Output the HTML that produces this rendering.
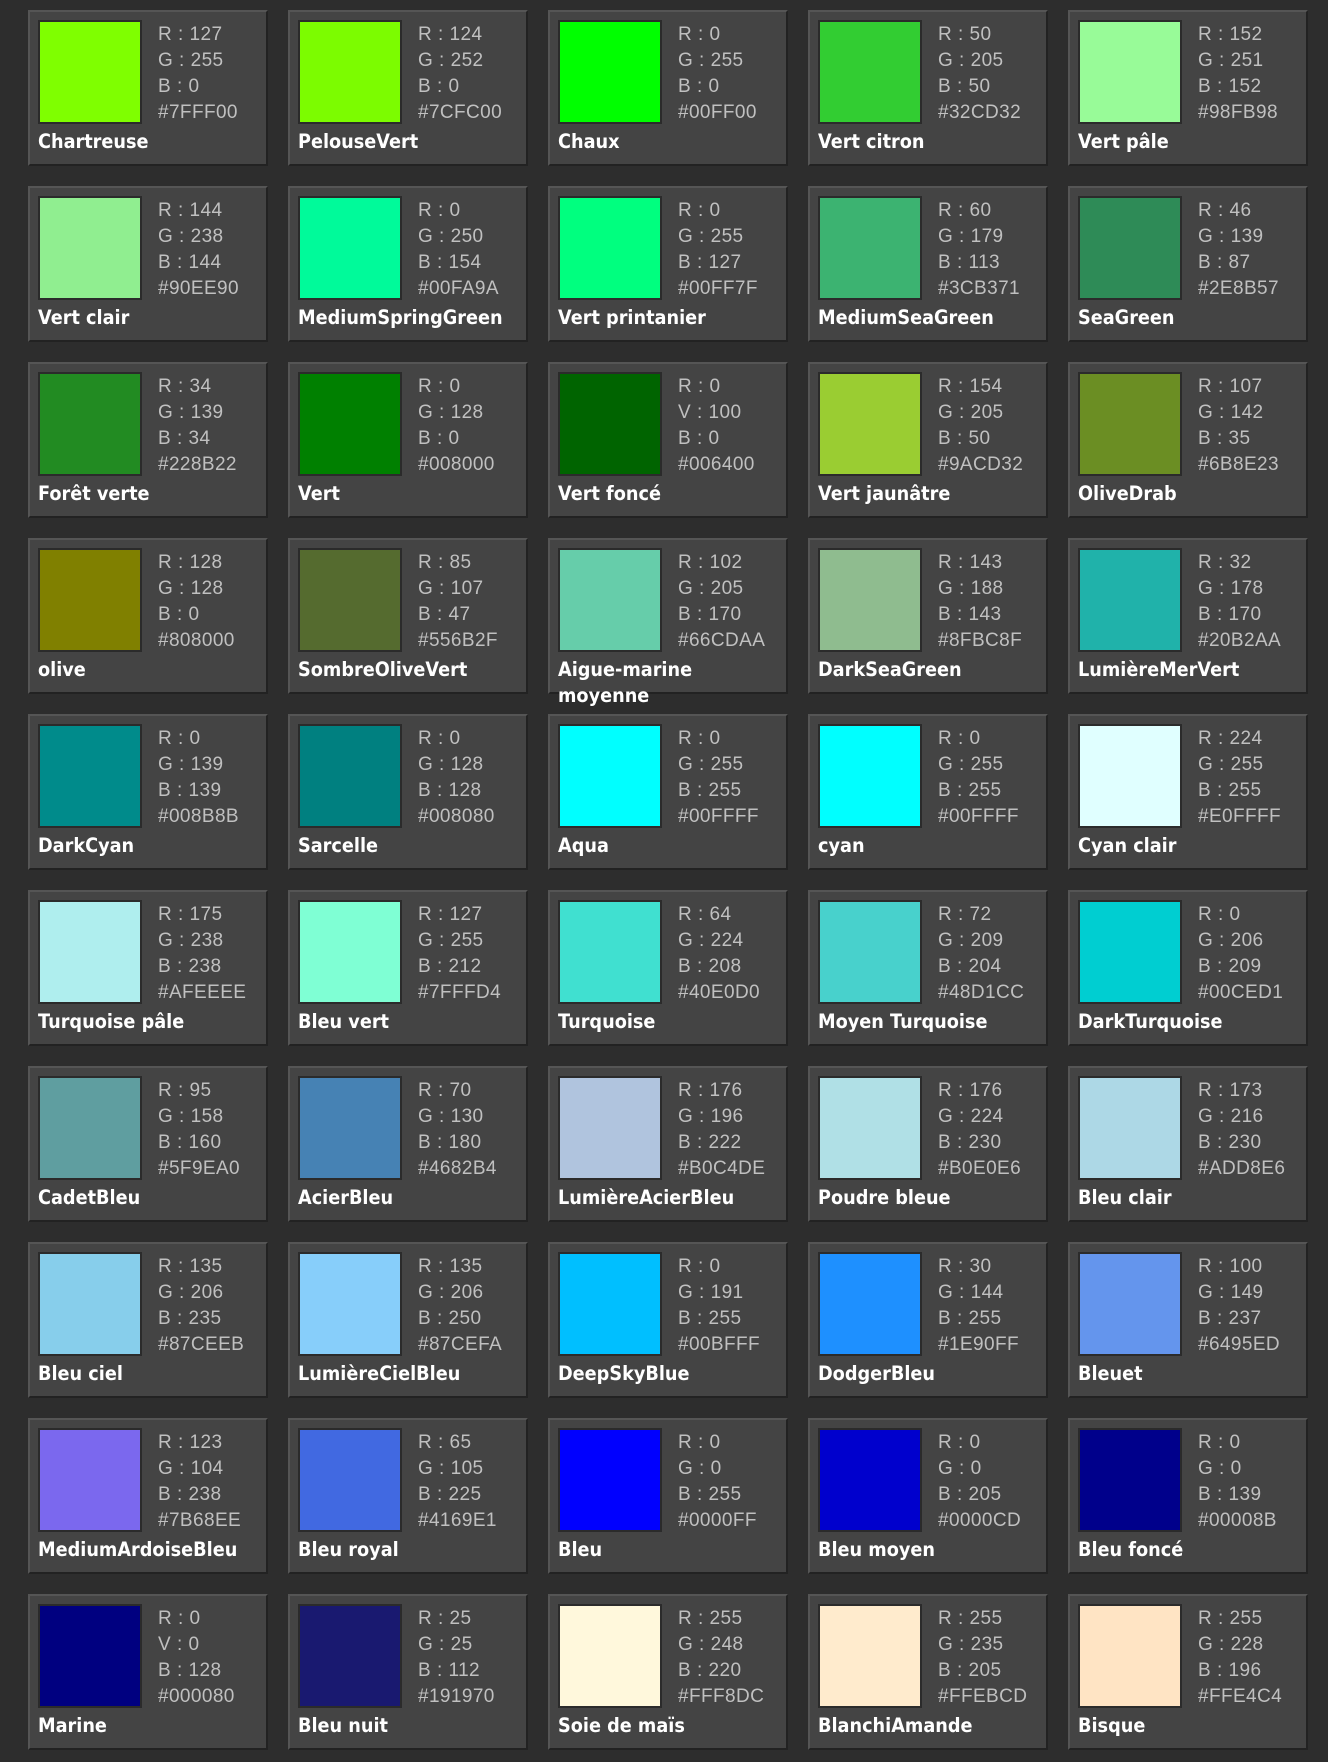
<!DOCTYPE html>
<html lang="fr"><head><meta charset="utf-8"><title>Couleurs</title>
<style>
html,body{margin:0;padding:0;width:1328px;height:1762px;background:#2d2d2d;overflow:hidden}
.g{position:absolute;left:28px;top:10px;display:grid;grid-template-columns:repeat(5,240px);grid-auto-rows:156px;column-gap:20px;row-gap:20px}
.c{position:relative;box-sizing:border-box;background:#444;border:2px solid;border-color:#555 #222 #222 #555;font-family:"DejaVu Sans","Liberation Sans",sans-serif}
.s{position:absolute;left:8px;top:8px;width:100px;height:100px;border:2px solid #2b2b2b}
.t{position:absolute;left:128px;top:10px;font-family:"Liberation Sans",sans-serif;font-size:19px;line-height:26px;color:#c0c0c0;letter-spacing:.4px;word-spacing:.2px;white-space:nowrap}
.n{position:absolute;left:8px;top:119px;width:225px;font-size:17.7px;line-height:24px;font-weight:bold;color:#fff;transform:scaleY(1.08);transform-origin:0 18px}
</style></head><body>
<div class="g">
<div class="c"><div class="s" style="background:#7FFF00"></div><div class="t">R : 127<br>G : 255<br>B : 0<br>#7FFF00</div><div class="n">Chartreuse</div></div>
<div class="c"><div class="s" style="background:#7CFC00"></div><div class="t">R : 124<br>G : 252<br>B : 0<br>#7CFC00</div><div class="n">PelouseVert</div></div>
<div class="c"><div class="s" style="background:#00FF00"></div><div class="t">R : 0<br>G : 255<br>B : 0<br>#00FF00</div><div class="n">Chaux</div></div>
<div class="c"><div class="s" style="background:#32CD32"></div><div class="t">R : 50<br>G : 205<br>B : 50<br>#32CD32</div><div class="n">Vert citron</div></div>
<div class="c"><div class="s" style="background:#98FB98"></div><div class="t">R : 152<br>G : 251<br>B : 152<br>#98FB98</div><div class="n">Vert pâle</div></div>
<div class="c"><div class="s" style="background:#90EE90"></div><div class="t">R : 144<br>G : 238<br>B : 144<br>#90EE90</div><div class="n">Vert clair</div></div>
<div class="c"><div class="s" style="background:#00FA9A"></div><div class="t">R : 0<br>G : 250<br>B : 154<br>#00FA9A</div><div class="n">MediumSpringGreen</div></div>
<div class="c"><div class="s" style="background:#00FF7F"></div><div class="t">R : 0<br>G : 255<br>B : 127<br>#00FF7F</div><div class="n">Vert printanier</div></div>
<div class="c"><div class="s" style="background:#3CB371"></div><div class="t">R : 60<br>G : 179<br>B : 113<br>#3CB371</div><div class="n">MediumSeaGreen</div></div>
<div class="c"><div class="s" style="background:#2E8B57"></div><div class="t">R : 46<br>G : 139<br>B : 87<br>#2E8B57</div><div class="n">SeaGreen</div></div>
<div class="c"><div class="s" style="background:#228B22"></div><div class="t">R : 34<br>G : 139<br>B : 34<br>#228B22</div><div class="n">Forêt verte</div></div>
<div class="c"><div class="s" style="background:#008000"></div><div class="t">R : 0<br>G : 128<br>B : 0<br>#008000</div><div class="n">Vert</div></div>
<div class="c"><div class="s" style="background:#006400"></div><div class="t">R : 0<br>V : 100<br>B : 0<br>#006400</div><div class="n">Vert foncé</div></div>
<div class="c"><div class="s" style="background:#9ACD32"></div><div class="t">R : 154<br>G : 205<br>B : 50<br>#9ACD32</div><div class="n">Vert jaunâtre</div></div>
<div class="c"><div class="s" style="background:#6B8E23"></div><div class="t">R : 107<br>G : 142<br>B : 35<br>#6B8E23</div><div class="n">OliveDrab</div></div>
<div class="c"><div class="s" style="background:#808000"></div><div class="t">R : 128<br>G : 128<br>B : 0<br>#808000</div><div class="n">olive</div></div>
<div class="c"><div class="s" style="background:#556B2F"></div><div class="t">R : 85<br>G : 107<br>B : 47<br>#556B2F</div><div class="n">SombreOliveVert</div></div>
<div class="c"><div class="s" style="background:#66CDAA"></div><div class="t">R : 102<br>G : 205<br>B : 170<br>#66CDAA</div><div class="n">Aigue-marine moyenne</div></div>
<div class="c"><div class="s" style="background:#8FBC8F"></div><div class="t">R : 143<br>G : 188<br>B : 143<br>#8FBC8F</div><div class="n">DarkSeaGreen</div></div>
<div class="c"><div class="s" style="background:#20B2AA"></div><div class="t">R : 32<br>G : 178<br>B : 170<br>#20B2AA</div><div class="n">LumièreMerVert</div></div>
<div class="c"><div class="s" style="background:#008B8B"></div><div class="t">R : 0<br>G : 139<br>B : 139<br>#008B8B</div><div class="n">DarkCyan</div></div>
<div class="c"><div class="s" style="background:#008080"></div><div class="t">R : 0<br>G : 128<br>B : 128<br>#008080</div><div class="n">Sarcelle</div></div>
<div class="c"><div class="s" style="background:#00FFFF"></div><div class="t">R : 0<br>G : 255<br>B : 255<br>#00FFFF</div><div class="n">Aqua</div></div>
<div class="c"><div class="s" style="background:#00FFFF"></div><div class="t">R : 0<br>G : 255<br>B : 255<br>#00FFFF</div><div class="n">cyan</div></div>
<div class="c"><div class="s" style="background:#E0FFFF"></div><div class="t">R : 224<br>G : 255<br>B : 255<br>#E0FFFF</div><div class="n">Cyan clair</div></div>
<div class="c"><div class="s" style="background:#AFEEEE"></div><div class="t">R : 175<br>G : 238<br>B : 238<br>#AFEEEE</div><div class="n">Turquoise pâle</div></div>
<div class="c"><div class="s" style="background:#7FFFD4"></div><div class="t">R : 127<br>G : 255<br>B : 212<br>#7FFFD4</div><div class="n">Bleu vert</div></div>
<div class="c"><div class="s" style="background:#40E0D0"></div><div class="t">R : 64<br>G : 224<br>B : 208<br>#40E0D0</div><div class="n">Turquoise</div></div>
<div class="c"><div class="s" style="background:#48D1CC"></div><div class="t">R : 72<br>G : 209<br>B : 204<br>#48D1CC</div><div class="n">Moyen Turquoise</div></div>
<div class="c"><div class="s" style="background:#00CED1"></div><div class="t">R : 0<br>G : 206<br>B : 209<br>#00CED1</div><div class="n">DarkTurquoise</div></div>
<div class="c"><div class="s" style="background:#5F9EA0"></div><div class="t">R : 95<br>G : 158<br>B : 160<br>#5F9EA0</div><div class="n">CadetBleu</div></div>
<div class="c"><div class="s" style="background:#4682B4"></div><div class="t">R : 70<br>G : 130<br>B : 180<br>#4682B4</div><div class="n">AcierBleu</div></div>
<div class="c"><div class="s" style="background:#B0C4DE"></div><div class="t">R : 176<br>G : 196<br>B : 222<br>#B0C4DE</div><div class="n">LumièreAcierBleu</div></div>
<div class="c"><div class="s" style="background:#B0E0E6"></div><div class="t">R : 176<br>G : 224<br>B : 230<br>#B0E0E6</div><div class="n">Poudre bleue</div></div>
<div class="c"><div class="s" style="background:#ADD8E6"></div><div class="t">R : 173<br>G : 216<br>B : 230<br>#ADD8E6</div><div class="n">Bleu clair</div></div>
<div class="c"><div class="s" style="background:#87CEEB"></div><div class="t">R : 135<br>G : 206<br>B : 235<br>#87CEEB</div><div class="n">Bleu ciel</div></div>
<div class="c"><div class="s" style="background:#87CEFA"></div><div class="t">R : 135<br>G : 206<br>B : 250<br>#87CEFA</div><div class="n">LumièreCielBleu</div></div>
<div class="c"><div class="s" style="background:#00BFFF"></div><div class="t">R : 0<br>G : 191<br>B : 255<br>#00BFFF</div><div class="n">DeepSkyBlue</div></div>
<div class="c"><div class="s" style="background:#1E90FF"></div><div class="t">R : 30<br>G : 144<br>B : 255<br>#1E90FF</div><div class="n">DodgerBleu</div></div>
<div class="c"><div class="s" style="background:#6495ED"></div><div class="t">R : 100<br>G : 149<br>B : 237<br>#6495ED</div><div class="n">Bleuet</div></div>
<div class="c"><div class="s" style="background:#7B68EE"></div><div class="t">R : 123<br>G : 104<br>B : 238<br>#7B68EE</div><div class="n">MediumArdoiseBleu</div></div>
<div class="c"><div class="s" style="background:#4169E1"></div><div class="t">R : 65<br>G : 105<br>B : 225<br>#4169E1</div><div class="n">Bleu royal</div></div>
<div class="c"><div class="s" style="background:#0000FF"></div><div class="t">R : 0<br>G : 0<br>B : 255<br>#0000FF</div><div class="n">Bleu</div></div>
<div class="c"><div class="s" style="background:#0000CD"></div><div class="t">R : 0<br>G : 0<br>B : 205<br>#0000CD</div><div class="n">Bleu moyen</div></div>
<div class="c"><div class="s" style="background:#00008B"></div><div class="t">R : 0<br>G : 0<br>B : 139<br>#00008B</div><div class="n">Bleu foncé</div></div>
<div class="c"><div class="s" style="background:#000080"></div><div class="t">R : 0<br>V : 0<br>B : 128<br>#000080</div><div class="n">Marine</div></div>
<div class="c"><div class="s" style="background:#191970"></div><div class="t">R : 25<br>G : 25<br>B : 112<br>#191970</div><div class="n">Bleu nuit</div></div>
<div class="c"><div class="s" style="background:#FFF8DC"></div><div class="t">R : 255<br>G : 248<br>B : 220<br>#FFF8DC</div><div class="n">Soie de maïs</div></div>
<div class="c"><div class="s" style="background:#FFEBCD"></div><div class="t">R : 255<br>G : 235<br>B : 205<br>#FFEBCD</div><div class="n">BlanchiAmande</div></div>
<div class="c"><div class="s" style="background:#FFE4C4"></div><div class="t">R : 255<br>G : 228<br>B : 196<br>#FFE4C4</div><div class="n">Bisque</div></div>
</div>
</body></html>
